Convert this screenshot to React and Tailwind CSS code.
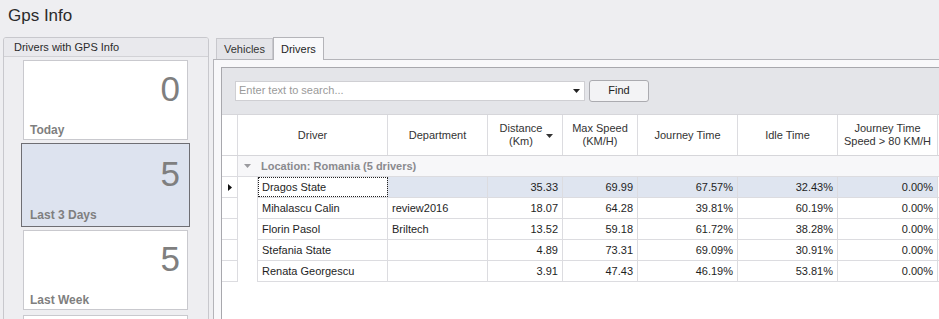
const rows = [
  { name: "Dragos State", dept: "", dist: "35.33", max: "69.99", jt: "67.57%", idle: "32.43%", fast: "0.00%" },
  { name: "Mihalascu Calin", dept: "review2016", dist: "18.07", max: "64.28", jt: "39.81%", idle: "60.19%", fast: "0.00%" },
  { name: "Florin Pasol", dept: "Briltech", dist: "13.52", max: "59.18", jt: "61.72%", idle: "38.28%", fast: "0.00%" },
  { name: "Stefania State", dept: "", dist: "4.89", max: "73.31", jt: "69.09%", idle: "30.91%", fast: "0.00%" },
  { name: "Renata Georgescu", dept: "", dist: "3.91", max: "47.43", jt: "46.19%", idle: "53.81%", fast: "0.00%" },
];

const cards = [
  { value: "0", label: "Today" },
  { value: "5", label: "Last 3 Days", active: true },
  { value: "5", label: "Last Week" },
];

const DownArrow = ({ color = "#333" }) => (
  <svg width="7" height="4" viewBox="0 0 7 4">
    <polygon points="0,0 7,0 3.5,4" fill={color} />
  </svg>
);

const Card = ({ value, label, active }) => {
  if (active) {
    return (
      <div className="flex flex-col justify-between w-[169px] h-[84px] shrink-0 -my-[2px] -ml-[2px] border border-[#6e6e73] bg-[#dde3ef] pl-[8px] pr-[9px] pt-[12px] pb-[2px]">
        <div className="text-right text-[35px] leading-none text-[#7f7f7f]">{value}</div>
        <div className="text-[12px] font-bold text-[#7f7f7f]">{label}</div>
      </div>
    );
  }
  return (
    <div className="flex flex-col justify-between w-[165px] h-[80px] shrink-0 border border-[#c9c9ce] bg-white pl-[6px] pr-[7px] pt-[10px] pb-0">
      <div className="text-right text-[35px] leading-none text-[#7f7f7f]">{value}</div>
      <div className="text-[12px] font-bold text-[#7f7f7f]">{label}</div>
    </div>
  );
};

const Cell = ({ w, children, right, className = "" }) => (
  <div
    className={`${w} h-full shrink-0 border-r border-[#dcdce0] flex items-center px-[4px] ${
      right ? "justify-end" : ""
    } ${className}`}
  >
    {children}
  </div>
);

export default function App() {
  return (
    <div className="w-[939px] h-[319px] overflow-hidden bg-[#eeeef1] text-[11px] text-[#1e1e1e] font-['Liberation_Sans',_Arial,_sans-serif]">
      <div className="h-[37px] pl-[8px] pt-[5px] text-[17px] leading-[22px] text-[#2b2b2b]">Gps Info</div>
      <div className="flex">
        {/* left group */}
        <div className="ml-[3px] w-[206px] h-[290px] shrink-0 border border-[#c8c8cd] rounded-t-[3px] flex flex-col overflow-hidden">
          <div className="h-[19px] shrink-0 border-b border-[#d2d2d6] bg-[#e9e9ed] pl-[10px] flex items-center text-[#2b2b2b]">
            Drivers with GPS Info
          </div>
          <div className="flex flex-col items-start pl-[19px] gap-[5px] pt-[3px]">
            {cards.map((c) => (
              <Card key={c.label} {...c} />
            ))}
            <div className="w-[165px] h-[80px] shrink-0 border border-[#c9c9ce] bg-white" />
          </div>
        </div>

        {/* right tabs */}
        <div className="ml-[4px] flex-1 flex flex-col">
          <div className="h-[22px] flex items-end pl-[3px]">
            <div className="h-[21px] px-[7px] flex items-center border border-b-0 border-[#c8c8cd] bg-[#e4e4e8] text-[#333]">
              Vehicles
            </div>
            <div className="h-[23px] -mb-[1px] px-[7px] flex items-center border border-b-0 border-[#b4b4b9] bg-[#f8f8fa] relative z-10">
              Drivers
            </div>
          </div>
          <div className="h-[260px] border-l border-t border-[#b4b4b9] bg-[#f8f8fa] pl-[7px] pt-[7px]">
            <div className="h-full border-l border-t border-[#a8a8ad] bg-white flex flex-col">
              {/* search */}
              <div className="h-[47px] shrink-0 bg-[#e4e5e9] border-b border-[#d6d6da] flex items-center pl-[13px] pb-[1px]">
                <div className="w-[350px] h-[20px] border border-[#cfcfd3] bg-white flex items-center pl-[3px] pr-[4px]">
                  <span className="flex-1 text-[#9a9a9a]">Enter text to search...</span>
                  <DownArrow color="#222" />
                </div>
                <div className="ml-[4px] w-[60px] h-[22px] border border-[#ababb0] rounded-[3px] bg-[#f3f3f5] flex items-center justify-center text-[#222]">
                  Find
                </div>
              </div>

              {/* header */}
              <div className="h-[41px] shrink-0 flex border-b border-[#d6d6da] text-[#333] text-center leading-[13px]">
                <div className="w-[16px] shrink-0 border-r border-[#dcdce0]" />
                <div className="w-[150px] shrink-0 border-r border-[#dcdce0] flex items-center justify-center">Driver</div>
                <div className="w-[100px] shrink-0 border-r border-[#dcdce0] flex items-center justify-center">Department</div>
                <div className="w-[75px] shrink-0 border-r border-[#dcdce0] flex items-center justify-center relative">
                  <span className="-ml-[8px]">Distance<br />(Km)</span>
                  <span className="absolute right-[9px] top-[19px]">
                    <DownArrow color="#333" />
                  </span>
                </div>
                <div className="w-[75px] shrink-0 border-r border-[#dcdce0] flex items-center justify-center">Max Speed<br />(KM/H)</div>
                <div className="w-[100px] shrink-0 border-r border-[#dcdce0] flex items-center justify-center">Journey Time</div>
                <div className="w-[100px] shrink-0 border-r border-[#dcdce0] flex items-center justify-center">Idle Time</div>
                <div className="w-[100px] shrink-0 border-r border-[#dcdce0] flex items-center justify-center">Journey Time<br />Speed &gt; 80 KM/H</div>
              </div>

              {/* group row */}
              <div className="h-[21px] shrink-0 flex">
                <div className="w-[16px] shrink-0 border-r border-b border-[#dcdce0]" />
                <div className="flex-1 bg-[#f7f7f9] border-b border-[#dcdce0] flex items-center pl-[6px] gap-[10px] font-bold text-[#8a8a8e]">
                  <DownArrow color="#9a9a9e" />
                  <span>Location: Romania (5 drivers)</span>
                </div>
              </div>

              {/* data rows */}
              {rows.map((r, i) => {
                const sel = i === 0;
                const bg = sel ? "bg-[#dfe5f0]" : "";
                return (
                  <div key={r.name} className="h-[21px] shrink-0 flex">
                    <div className="w-[16px] shrink-0 border-r border-b border-[#dcdce0] flex items-center justify-center">
                      {sel && (
                        <svg width="4" height="7" viewBox="0 0 4 7">
                          <polygon points="0,0 4,3.5 0,7" fill="#111" />
                        </svg>
                      )}
                    </div>
                    <div className="w-[20px] shrink-0 border-r border-[#dcdce0]" />
                    <div className="flex flex-1 border-b border-[#dcdce0]">
                      <Cell w="w-[130px]" className={sel ? "outline outline-1 outline-dotted outline-[#222] -outline-offset-1" : ""}>
                        {r.name}
                      </Cell>
                      <Cell w="w-[100px]" className={bg}>{r.dept}</Cell>
                      <Cell w="w-[75px]" right className={bg}>{r.dist}</Cell>
                      <Cell w="w-[75px]" right className={bg}>{r.max}</Cell>
                      <Cell w="w-[100px]" right className={bg}>{r.jt}</Cell>
                      <Cell w="w-[100px]" right className={bg}>{r.idle}</Cell>
                      <Cell w="w-[100px]" right className={bg}>{r.fast}</Cell>
                    </div>
                  </div>
                );
              })}
            </div>
          </div>
        </div>
      </div>
    </div>
  );
}
